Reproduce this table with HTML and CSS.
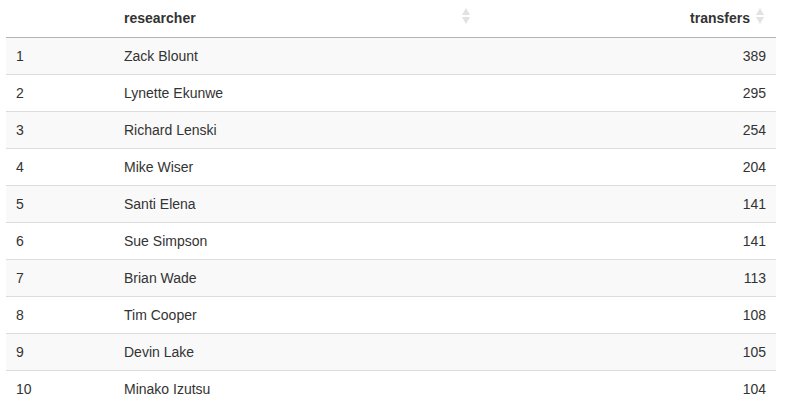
FILE: index.html
```html
<!DOCTYPE html>
<html>
<head>
<meta charset="utf-8">
<link rel="stylesheet" href="styles.css">
</head>
<body>
<table class="dt">
  <colgroup>
    <col class="c1"><col class="c2"><col class="c3">
  </colgroup>
  <thead>
    <tr>
      <th class="idx"></th>
      <th class="sortable">researcher<span class="sort"><i class="up"></i><i class="down"></i></span></th>
      <th class="sortable num">transfers<span class="sort"><i class="up"></i><i class="down"></i></span></th>
    </tr>
  </thead>
  <tbody>
    <tr><td>1</td><td>Zack Blount</td><td class="num">389</td></tr>
    <tr><td>2</td><td>Lynette Ekunwe</td><td class="num">295</td></tr>
    <tr><td>3</td><td>Richard Lenski</td><td class="num">254</td></tr>
    <tr><td>4</td><td>Mike Wiser</td><td class="num">204</td></tr>
    <tr><td>5</td><td>Santi Elena</td><td class="num">141</td></tr>
    <tr><td>6</td><td>Sue Simpson</td><td class="num">141</td></tr>
    <tr><td>7</td><td>Brian Wade</td><td class="num">113</td></tr>
    <tr><td>8</td><td>Tim Cooper</td><td class="num">108</td></tr>
    <tr><td>9</td><td>Devin Lake</td><td class="num">105</td></tr>
    <tr><td>10</td><td>Minako Izutsu</td><td class="num">104</td></tr>
  </tbody>
</table>
</body>
</html>
```
FILE: styles.css
```css
html, body {
  margin: 0;
  padding: 0;
  background: #fff;
}
body {
  padding: 0 10px 0 6px;
  font-family: "Liberation Sans", Arial, Helvetica, sans-serif;
  font-size: 14px;
  color: #333;
}
.dt {
  width: 770px;
  border-collapse: collapse;
  table-layout: fixed;
}
.c1 { width: 108px; }
.c2 { width: 368px; }
.c3 { width: 294px; }
.dt th {
  font-weight: bold;
  text-align: left;
  padding: 9px 10px 10px 10px;
  height: 18px;
  line-height: 18px;
  border-bottom: 1px solid #b3b3b3;
  position: relative;
}
.dt th.sortable { padding-right: 28px; }
.dt th.sortable.num { padding-right: 26px; text-align: right; }
.dt td {
  padding: 0 10px;
  height: 36px;
  line-height: 18px;
  border-top: 1px solid #ddd;
}
.dt thead + tbody tr:first-child td { border-top: none; }
.dt td.num { text-align: right; }
.dt tbody tr:nth-child(odd) { background: #f9f9f9; }
.sort {
  position: absolute;
  right: 12px;
  top: 8px;
  width: 8px;
  height: 18px;
}
.sort i {
  position: absolute;
  left: 0;
  width: 0;
  height: 0;
  border-left: 4px solid transparent;
  border-right: 4px solid transparent;
}
.sort .up {
  top: 0;
  border-bottom: 7px solid #e2e2e2;
}
.sort .down {
  top: 9px;
  border-top: 7px solid #e2e2e2;
}
```
